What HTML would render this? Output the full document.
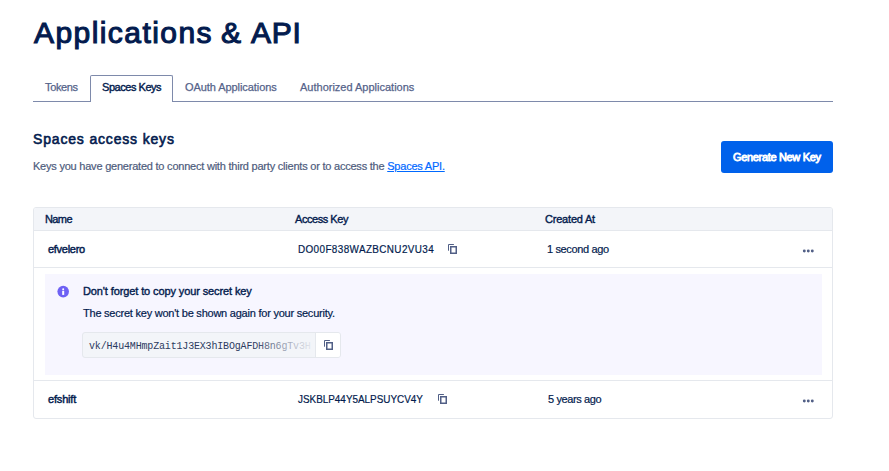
<!DOCTYPE html>
<html><head><meta charset="utf-8">
<style>
*{box-sizing:border-box;margin:0;padding:0}
html,body{width:889px;height:471px;overflow:hidden;background:#fff;font-family:"Liberation Sans",sans-serif;color:#031b4e}
.abs{position:absolute;white-space:nowrap;line-height:normal}
.title,#title{left:34px;top:16px;font-size:30px;font-weight:normal;-webkit-text-stroke:1.1px currentColor;letter-spacing:1.25px;color:#031b4e}
.tabline{position:absolute;left:33px;top:101px;width:800px;height:1px;background:#7e8aab}
.tabact{position:absolute;left:90px;top:75px;width:83px;height:27px;border:1px solid #7e8aab;border-bottom:none;background:#fff;border-radius:2px 2px 0 0}
.tab{font-size:11px;color:#55638a;top:81px;-webkit-text-stroke:0.25px currentColor}
.tab.on{color:#031b4e;-webkit-text-stroke:0.4px #031b4e}
#h2{left:33px;top:131px;font-size:14px;font-weight:normal;-webkit-text-stroke:0.6px currentColor}
#desc{left:33px;top:160px;font-size:11px;color:#4d5b7c;-webkit-text-stroke:0.2px currentColor}
#desc a{color:#0069ff;text-decoration:underline}
.btn{position:absolute;left:721px;top:141px;width:112px;height:32px;background:#0061eb;border-radius:3px}
#btntxt{left:733px;top:151px;font-size:11px;font-weight:normal;-webkit-text-stroke:0.8px #fff;color:#fff}
.table{position:absolute;left:33px;top:207px;width:800px;height:212px;border:1px solid #e5e8ed;border-radius:3px;overflow:hidden}
.thead{position:absolute;left:0;top:0;width:100%;height:23px;background:#f3f5f9;border-bottom:1px solid #e5e8ed}
.hr{position:absolute;left:0;width:100%;height:1px;background:#e5e8ed}
.th{font-size:11px;font-weight:normal;-webkit-text-stroke:0.38px currentColor;top:213px}
.td{font-size:11px;-webkit-text-stroke:0.2px currentColor}
.notice{position:absolute;left:45px;top:274px;width:777px;height:101px;background:#f7f6ff;border-radius:0}
.code{position:absolute;left:82px;top:332px;width:259px;height:26px;border:1px solid #e5e8ed;border-radius:3px;background:#f3f5f9;overflow:hidden}
.codebtn{position:absolute;left:232px;top:0;width:26px;height:24px;background:#fff;border-left:1px solid #e5e8ed}
.fade{position:absolute;left:170px;top:0;width:62px;height:24px;background:linear-gradient(to right,rgba(243,245,249,0) 0%,rgba(243,245,249,0.55) 50%,rgba(243,245,249,0.97) 100%)}
.ic{position:absolute;display:block}
.mono{font-family:"Liberation Mono",monospace;font-size:10px;color:#2c3a60}
</style></head><body>
<div id="title" class="abs" style="letter-spacing:1.43px">Applications</div><div id="title2" class="abs title" style="left:221px">&amp;</div><div id="title3" class="abs title" style="left:251px;letter-spacing:0.75px">API</div>
<div class="tabline"></div>
<div class="tabact"></div>
<div id="t1" class="abs tab" style="letter-spacing:-0.36px;left:45px">Tokens</div>
<div id="t2" class="abs tab on" style="letter-spacing:-0.46px;left:102px">Spaces Keys</div>
<div id="t3" class="abs tab" style="letter-spacing:-0.07px;left:185px">OAuth Applications</div>
<div id="t4" class="abs tab" style="left:300px">Authorized Applications</div>

<div id="h2" class="abs" style="letter-spacing:0.83px">Spaces access keys</div>
<div id="desc" class="abs" style="letter-spacing:-0.22px">Keys you have generated to connect with third party clients or to access the <a>Spaces API.</a></div>
<div class="btn"></div>
<div id="btntxt" class="abs" style="letter-spacing:-0.33px">Generate New Key</div>

<div class="table">
  <div class="thead"></div>
  <div class="hr" style="top:59px"></div>
  <div class="hr" style="top:172px"></div>
</div>
<div id="th1" class="abs th" style="letter-spacing:-0.6px;left:45px">Name</div>
<div id="th2" class="abs th" style="letter-spacing:-0.45px;left:295px">Access Key</div>
<div id="th3" class="abs th" style="letter-spacing:-0.2px;left:545px">Created At</div>

<div id="r1a" class="abs td" style="-webkit-text-stroke:0.45px currentColor;letter-spacing:-0.28px;left:48px;top:243px">efvelero</div>
<div id="r1b" class="abs td" style="letter-spacing:0.43px;transform:scaleX(0.9);transform-origin:0 0;left:298px;top:243px">DO00F838WAZBCNU2VU34</div>
<svg class="ic" style="left:446px;top:243px" width="12" height="12" viewBox="0 0 12 12"><path d="M2.5 7.7V1.5H7.9" fill="none" stroke="#515f86" stroke-width="1"/><rect x="4.75" y="3.75" width="5.5" height="6.5" fill="none" stroke="#515f86" stroke-width="1.5"/></svg>
<svg class="ic" style="left:800px;top:247.5px" width="16" height="6" viewBox="0 0 16 6"><circle cx="4.3" cy="3" r="1.45" fill="#515f86"/><circle cx="8.3" cy="3" r="1.45" fill="#515f86"/><circle cx="12.3" cy="3" r="1.45" fill="#515f86"/></svg>
<div id="r1c" class="abs td" style="letter-spacing:-0.36px;left:547px;top:243px">1 second ago</div>

<div class="notice"></div>
<svg class="ic" style="left:57px;top:285px" width="13" height="13" viewBox="0 0 13 13"><circle cx="6.2" cy="6.6" r="5.8" fill="#6e61f4"/><rect x="5.2" y="5.8" width="2" height="4.1" fill="#fff"/><circle cx="6.2" cy="4.2" r="1.0" fill="#fff"/></svg>
<div id="n1" class="abs td" style="letter-spacing:-0.11px;left:83px;top:285px;-webkit-text-stroke:0.38px currentColor">Don't forget to copy your secret key</div>
<div id="n2" class="abs td" style="letter-spacing:-0.23px;left:83px;top:307px">The secret key won't be shown again for your security.</div>
<div class="code">
  <div id="code" class="abs mono" style="left:6px;top:8px;letter-spacing:-0.17px">vk/H4u4MHmpZait1J3EX3hIBOgAFDH8n6gTv3H</div>
  <div class="fade"></div>
  <div class="codebtn"></div>
</div>
<svg class="ic" style="left:322px;top:339px" width="12" height="12" viewBox="0 0 12 12"><path d="M2.5 7.7V1.5H7.9" fill="none" stroke="#515f86" stroke-width="1"/><rect x="4.75" y="3.75" width="5.5" height="6.5" fill="none" stroke="#515f86" stroke-width="1.5"/></svg>

<div id="r2a" class="abs td" style="-webkit-text-stroke:0.45px currentColor;letter-spacing:-0.18px;left:48px;top:393px">efshift</div>
<div id="r2b" class="abs td" style="letter-spacing:0px;transform:scaleX(0.9);transform-origin:0 0;left:298px;top:393px">JSKBLP44Y5ALPSUYCV4Y</div>
<svg class="ic" style="left:436px;top:393px" width="12" height="12" viewBox="0 0 12 12"><path d="M2.5 7.7V1.5H7.9" fill="none" stroke="#515f86" stroke-width="1"/><rect x="4.75" y="3.75" width="5.5" height="6.5" fill="none" stroke="#515f86" stroke-width="1.5"/></svg>
<svg class="ic" style="left:800px;top:397.5px" width="16" height="6" viewBox="0 0 16 6"><circle cx="4.3" cy="3" r="1.45" fill="#515f86"/><circle cx="8.3" cy="3" r="1.45" fill="#515f86"/><circle cx="12.3" cy="3" r="1.45" fill="#515f86"/></svg>
<div id="r2c" class="abs td" style="letter-spacing:-0.38px;left:548px;top:393px">5 years ago</div>
</body></html>
